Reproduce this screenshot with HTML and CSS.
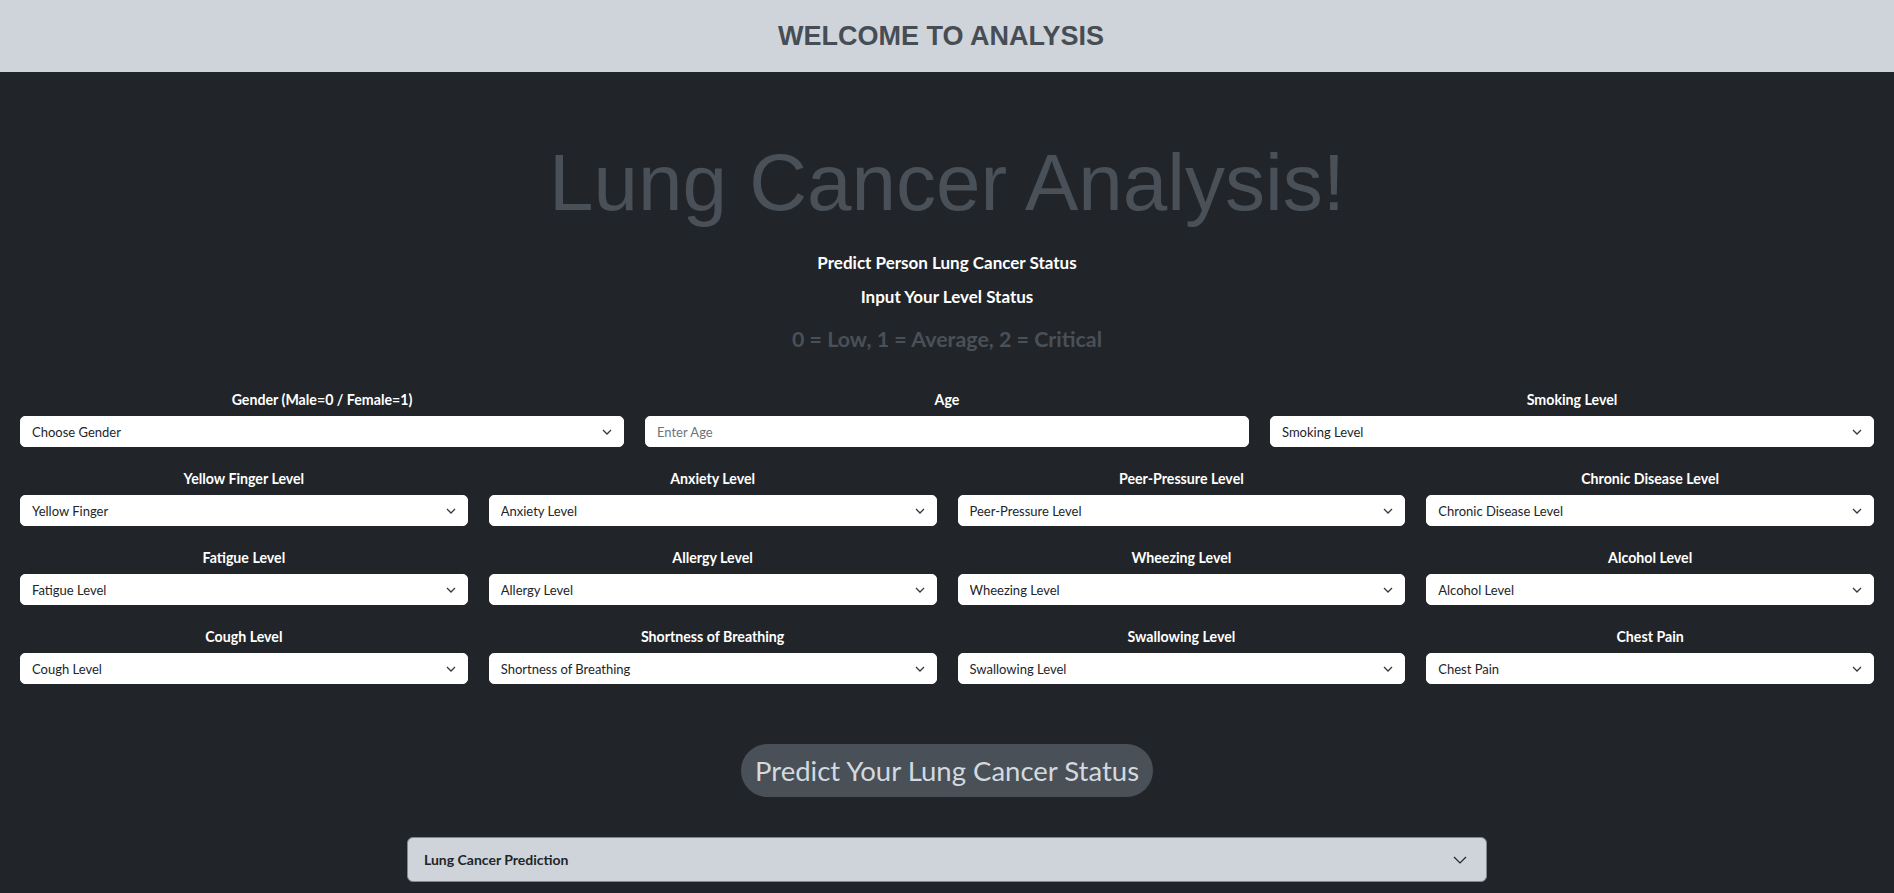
FILE: index.html
```html
<!DOCTYPE html>
<html lang="en">
<head>
<meta charset="utf-8">
<title>Lung Cancer Analysis</title>
<link rel="stylesheet" href="styles.css">
</head>
<body>
<header class="topbar">
  <h1 class="topbar-title">WELCOME TO ANALYSIS</h1>
</header>
<main class="page">
  <section class="hero">
    <h2 class="hero-title">Lung Cancer Analysis!</h2>
    <p class="hero-sub">Predict Person Lung Cancer Status</p>
    <p class="hero-sub hero-sub-2">Input Your Level Status</p>
    <h5 class="hero-scale">0 = Low, 1 = Average, 2 = Critical</h5>
  </section>

  <form class="form">
    <div class="form-row form-row-3">
      <div class="field">
        <label class="field-label">Gender (Male=0 / Female=1)</label>
        <div class="select-wrap">
          <select class="select"><option>Choose Gender</option></select>
          <svg class="chev" width="10" height="6" viewBox="0 0 10 6"><path d="M1 1l4 4 4-4" fill="none" stroke="#343a40" stroke-width="1.3"/></svg>
        </div>
      </div>
      <div class="field">
        <label class="field-label">Age</label>
        <input class="input" type="text" placeholder="Enter Age">
      </div>
      <div class="field">
        <label class="field-label">Smoking Level</label>
        <div class="select-wrap">
          <select class="select"><option>Smoking Level</option></select>
          <svg class="chev" width="10" height="6" viewBox="0 0 10 6"><path d="M1 1l4 4 4-4" fill="none" stroke="#343a40" stroke-width="1.3"/></svg>
        </div>
      </div>
    </div>

    <div class="form-row form-row-4">
      <div class="field">
        <label class="field-label">Yellow Finger Level</label>
        <div class="select-wrap">
          <select class="select"><option>Yellow Finger</option></select>
          <svg class="chev" width="10" height="6" viewBox="0 0 10 6"><path d="M1 1l4 4 4-4" fill="none" stroke="#343a40" stroke-width="1.3"/></svg>
        </div>
      </div>
      <div class="field">
        <label class="field-label">Anxiety Level</label>
        <div class="select-wrap">
          <select class="select"><option>Anxiety Level</option></select>
          <svg class="chev" width="10" height="6" viewBox="0 0 10 6"><path d="M1 1l4 4 4-4" fill="none" stroke="#343a40" stroke-width="1.3"/></svg>
        </div>
      </div>
      <div class="field">
        <label class="field-label">Peer-Pressure Level</label>
        <div class="select-wrap">
          <select class="select"><option>Peer-Pressure Level</option></select>
          <svg class="chev" width="10" height="6" viewBox="0 0 10 6"><path d="M1 1l4 4 4-4" fill="none" stroke="#343a40" stroke-width="1.3"/></svg>
        </div>
      </div>
      <div class="field">
        <label class="field-label">Chronic Disease Level</label>
        <div class="select-wrap">
          <select class="select"><option>Chronic Disease Level</option></select>
          <svg class="chev" width="10" height="6" viewBox="0 0 10 6"><path d="M1 1l4 4 4-4" fill="none" stroke="#343a40" stroke-width="1.3"/></svg>
        </div>
      </div>
    </div>

    <div class="form-row form-row-4">
      <div class="field">
        <label class="field-label">Fatigue Level</label>
        <div class="select-wrap">
          <select class="select"><option>Fatigue Level</option></select>
          <svg class="chev" width="10" height="6" viewBox="0 0 10 6"><path d="M1 1l4 4 4-4" fill="none" stroke="#343a40" stroke-width="1.3"/></svg>
        </div>
      </div>
      <div class="field">
        <label class="field-label">Allergy Level</label>
        <div class="select-wrap">
          <select class="select"><option>Allergy Level</option></select>
          <svg class="chev" width="10" height="6" viewBox="0 0 10 6"><path d="M1 1l4 4 4-4" fill="none" stroke="#343a40" stroke-width="1.3"/></svg>
        </div>
      </div>
      <div class="field">
        <label class="field-label">Wheezing Level</label>
        <div class="select-wrap">
          <select class="select"><option>Wheezing Level</option></select>
          <svg class="chev" width="10" height="6" viewBox="0 0 10 6"><path d="M1 1l4 4 4-4" fill="none" stroke="#343a40" stroke-width="1.3"/></svg>
        </div>
      </div>
      <div class="field">
        <label class="field-label">Alcohol Level</label>
        <div class="select-wrap">
          <select class="select"><option>Alcohol Level</option></select>
          <svg class="chev" width="10" height="6" viewBox="0 0 10 6"><path d="M1 1l4 4 4-4" fill="none" stroke="#343a40" stroke-width="1.3"/></svg>
        </div>
      </div>
    </div>

    <div class="form-row form-row-4">
      <div class="field">
        <label class="field-label">Cough Level</label>
        <div class="select-wrap">
          <select class="select"><option>Cough Level</option></select>
          <svg class="chev" width="10" height="6" viewBox="0 0 10 6"><path d="M1 1l4 4 4-4" fill="none" stroke="#343a40" stroke-width="1.3"/></svg>
        </div>
      </div>
      <div class="field">
        <label class="field-label">Shortness of Breathing</label>
        <div class="select-wrap">
          <select class="select"><option>Shortness of Breathing</option></select>
          <svg class="chev" width="10" height="6" viewBox="0 0 10 6"><path d="M1 1l4 4 4-4" fill="none" stroke="#343a40" stroke-width="1.3"/></svg>
        </div>
      </div>
      <div class="field">
        <label class="field-label">Swallowing Level</label>
        <div class="select-wrap">
          <select class="select"><option>Swallowing Level</option></select>
          <svg class="chev" width="10" height="6" viewBox="0 0 10 6"><path d="M1 1l4 4 4-4" fill="none" stroke="#343a40" stroke-width="1.3"/></svg>
        </div>
      </div>
      <div class="field">
        <label class="field-label">Chest Pain</label>
        <div class="select-wrap">
          <select class="select"><option>Chest Pain</option></select>
          <svg class="chev" width="10" height="6" viewBox="0 0 10 6"><path d="M1 1l4 4 4-4" fill="none" stroke="#343a40" stroke-width="1.3"/></svg>
        </div>
      </div>
    </div>

    <div class="actions">
      <button type="button" class="predict-btn">Predict Your Lung Cancer Status</button>
    </div>
  </form>

  <div class="accordion">
    <button type="button" class="accordion-btn">
      <span>Lung Cancer Prediction</span>
      <svg class="accordion-chev" width="14" height="8" viewBox="0 0 14 8"><path d="M1 1l6 6 6-6" fill="none" stroke="#212529" stroke-width="1.2"/></svg>
    </button>
  </div>
</main>
</body>
</html>
```

FILE: styles.css
```css
* { box-sizing: border-box; }

html, body {
  margin: 0;
  padding: 0;
}

body {
  background: #212529;
  font-family: Lato, "Open Sans", sans-serif;
  color: #ffffff;
  min-height: 893px;
}

.topbar {
  height: 72px;
  background: #ced4da;
  display: flex;
  align-items: center;
  justify-content: center;
  padding-right: 12px;
}

.topbar-title {
  margin: 0;
  font-family: "Liberation Sans", Arial, sans-serif;
  font-size: 27px;
  font-weight: 700;
  color: #474d55;
  line-height: 1;
}

.page {
  padding: 0 20px 11px;
}

.hero {
  text-align: center;
}

.hero-title {
  margin: 63px 0 0;
  font-family: "Liberation Sans", Arial, sans-serif;
  font-size: 80px;
  font-weight: 300;
  line-height: 96px;
  color: #495057;
}

.hero-sub {
  margin: 20px 0 0;
  font-size: 17px;
  font-weight: 700;
  line-height: 24px;
  color: #ffffff;
}

.hero-sub-2 {
  margin-top: 10px;
}

.hero-scale {
  margin: 18px 0 0;
  font-size: 21.4px;
  font-weight: 700;
  line-height: 24px;
  color: #4a5058;
}

.form {
  margin-top: 38px;
}

.form-row {
  display: grid;
  column-gap: 21px;
  margin-bottom: 21px;
}

.form-row-3 { grid-template-columns: repeat(3, 1fr); }
.form-row-4 { grid-template-columns: repeat(4, 1fr); }

.field {
  display: flex;
  flex-direction: column;
}

.field-label {
  text-align: center;
  font-size: 14.2px;
  font-weight: 700;
  line-height: 21px;
  margin-bottom: 6px;
  color: #ffffff;
}

.select-wrap {
  position: relative;
}

.select,
.input {
  display: block;
  width: 100%;
  height: 31px;
  margin: 0;
  padding: 0 30px 0 11px;
  border: 1px solid #ffffff;
  border-radius: 5px;
  background: #ffffff;
  font-family: Lato, "Open Sans", sans-serif;
  font-size: 13px;
  color: #212529;
  appearance: none;
  -webkit-appearance: none;
  outline: none;
}

.input::placeholder {
  color: #6c757d;
}

.chev {
  position: absolute;
  right: 12px;
  top: 13px;
  pointer-events: none;
}

.actions {
  display: flex;
  justify-content: center;
  margin-top: 60px;
}

.predict-btn {
  height: 53px;
  padding: 0 14px;
  border: none;
  border-radius: 27px;
  background: #495057;
  color: #d3d9df;
  font-family: Lato, "Open Sans", sans-serif;
  font-size: 27.5px;
  font-weight: 400;
  cursor: pointer;
}

.accordion {
  width: 1080px;
  margin: 40px auto 0;
}

.accordion-btn {
  width: 100%;
  height: 45px;
  display: flex;
  align-items: center;
  justify-content: space-between;
  padding: 0 19px 0 16px;
  background: #ced4da;
  border: 1px solid #80878e;
  border-radius: 6px;
  font-family: Lato, "Open Sans", sans-serif;
  font-size: 14px;
  font-weight: 700;
  color: #212529;
  cursor: pointer;
}
```
